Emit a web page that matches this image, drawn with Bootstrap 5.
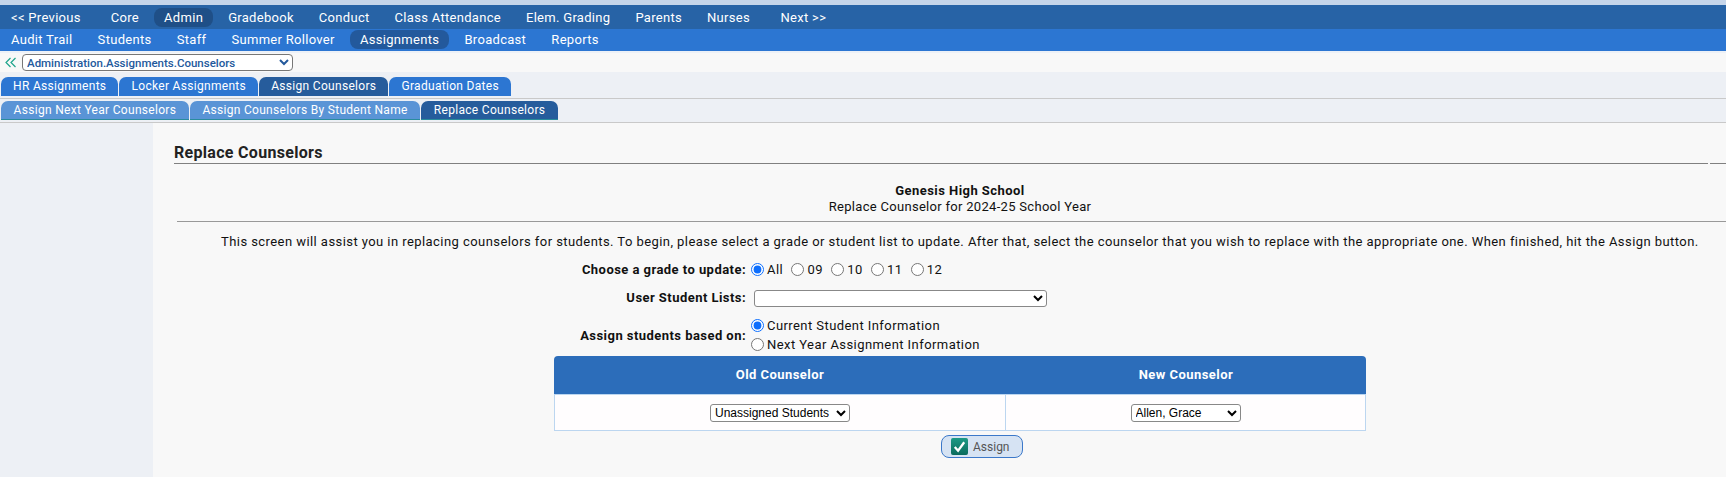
<!DOCTYPE html>
<html lang="en">
<head>
<meta charset="utf-8">
<title>Replace Counselors</title>
<link href="https://cdn.jsdelivr.net/npm/bootstrap@5.3.0/dist/css/bootstrap.min.css" rel="stylesheet">
<style>
html,body{height:100%;}
body{font-family:Roboto,"Liberation Sans",sans-serif;font-size:13px;background:#f8f8f8;color:#111;letter-spacing:.3px;overflow:hidden;}
.top-strip{height:5px;background:#c5d5ea;}
.menu-one{height:24px;background:#2763a6;padding-left:1px;}
.menu-two{height:22px;background:#2c76d2;padding-left:1px;}
.menu-one .nav-link,.menu-two .nav-link{color:#fff;font-size:13px;padding:0 10px;margin:0 5px 0 0;border-radius:8px;height:19px;line-height:19px;}
.menu-two .nav-link{margin-right:5.2px;}
.menu-one .nav-link{margin-top:3px;}
.menu-two .nav-link{margin-top:1px;}
.menu-one .nav-link.active-item{background:#1f4f87;}
.menu-two .nav-link.active-item{background:#23599c;}
.menu-one .nav-link.gap-prev{margin-right:10px;}
.menu-one .nav-link.gap-next{margin-left:5.5px;}
.crumb-row{height:21px;background:#f8f8f8;border-top:2px solid #edf1f7;padding-left:5px;}
.crumb-row svg{display:block;margin-right:5px;}
.crumb-select{width:271px;height:17px;font-family:Roboto,"Liberation Sans",sans-serif;font-size:11.5px;font-weight:500;color:#23599c;border:1px solid #777;border-radius:4px;background:#fff;padding:0;}
.tab-row{height:27px;background:#edf0f5;border-bottom:1px solid #c9c9c9;padding-left:1px;padding-bottom:2px;align-items:flex-end;gap:1px;}
.tab-row.sub-row{height:24px;}
.page-tab{display:block;color:#fff;text-decoration:none;font-size:12px;height:19px;line-height:18px;padding:0 12.1px;border-radius:7px 7px 0 0;background:#2c76d2;}
.sub-row .page-tab{background:#5a94d6;border-bottom:1px solid #2a8c9c;padding:0 12.6px;}
.page-tab.on{background:#265c9c;}
.sub-row .page-tab.on{background:#265c9c;}
.main-area{height:354px;}
.side-col{width:153px;background:#edf0f5;flex:none;}
.body-col{flex:1;min-width:0;background:#f8f8f8;}
.title-row{margin:14px 0 0 21px;gap:2px;}
.title-main{flex:1;border-bottom:1px solid #808080;font-size:16px;font-weight:700;letter-spacing:.3px;color:#222;height:27px;line-height:31px;padding-left:0;}
.title-stub{width:16px;border-bottom:1px solid #808080;height:27px;}
.school-block{margin-top:19px;line-height:16px;text-align:center;padding-left:41px;}
.school-name{font-weight:700;letter-spacing:.45px;}
.rule-line{margin:6px 0 0 24px;border-bottom:1px solid #999;height:0;}
.intro-text{text-align:center;margin:11px 0 0 0;padding-left:68px;padding-right:28px;line-height:18px;white-space:nowrap;letter-spacing:.435px;}
.form-line{align-items:center;}
.form-label-cell{width:598px;text-align:right;font-weight:700;letter-spacing:.45px;padding-right:5px;flex:none;}
.grade-line{margin-top:10px;height:18px;}
.grade-line label{margin-right:8.3px;display:flex;align-items:center;letter-spacing:.43px;}
.grade-line input,.based-line input{width:13px;height:13px;margin:0 3px 2px 0;accent-color:#0d6efd;}
.list-line{margin-top:10px;height:18px;}
.list-select{width:293px;height:17px;margin-left:3px;background:#fff;border:1px solid #888;border-radius:3px;}
.based-line{margin-top:10px;height:37px;}
.based-line label{display:flex;align-items:center;height:19px;letter-spacing:.43px;}
.pick-wrap{width:812px;margin:2px 0 0 401px;}
.pick-table{width:100%;margin:0;table-layout:fixed;border-collapse:separate;border-spacing:0;}
.pick-table th{background:#2c6dba;color:#fff;height:39px;text-align:center;vertical-align:middle;font-size:13px;padding:0;border-bottom:1px solid #bcd6f0;letter-spacing:.45px;}
.pick-table th:first-child{border-top-left-radius:4px;width:452px;}
.pick-table th:last-child{border-top-right-radius:4px;}
.pick-table td{background:#fffdfe;height:36px;text-align:center;vertical-align:middle;padding:0;border-bottom:1px solid #bcd6f0;border-right:1px solid #bcd6f0;}
.pick-table td:first-child{border-left:1px solid #bcd6f0;}
.pick-select{width:140px;height:18px;font-family:"Liberation Sans",Arial,sans-serif;font-size:12px;background:#fff;border:1px solid #888;border-radius:3px;padding:0;color:#000;letter-spacing:0;}
.pick-select.short-pick{width:110px;}
.assign-btn{display:flex;align-items:center;gap:5px;width:82px;height:23px;margin:4px 0 0 387px;background:#d6e3f3;border:1px solid #3b78c9;border-radius:8px;color:#555;font-size:12px;padding:0 0 0 9px;}
.assign-wrap{width:812px;margin-left:401px;}
</style>
</head>
<body>
<div class="top-strip"></div>
<nav class="nav menu-one">
  <a class="nav-link gap-prev" href="#">&lt;&lt; Previous</a>
  <a class="nav-link" href="#">Core</a>
  <a class="nav-link active-item" href="#">Admin</a>
  <a class="nav-link" href="#">Gradebook</a>
  <a class="nav-link" href="#">Conduct</a>
  <a class="nav-link" href="#">Class Attendance</a>
  <a class="nav-link" href="#">Elem. Grading</a>
  <a class="nav-link" href="#">Parents</a>
  <a class="nav-link" href="#">Nurses</a>
  <a class="nav-link gap-next" href="#">Next &gt;&gt;</a>
</nav>
<nav class="nav menu-two">
  <a class="nav-link" href="#">Audit Trail</a>
  <a class="nav-link" href="#">Students</a>
  <a class="nav-link" href="#">Staff</a>
  <a class="nav-link" href="#">Summer Rollover</a>
  <a class="nav-link active-item" href="#">Assignments</a>
  <a class="nav-link" href="#">Broadcast</a>
  <a class="nav-link" href="#">Reports</a>
</nav>
<div class="crumb-row d-flex align-items-center">
  <svg width="12" height="11" viewBox="0 0 12 11" fill="none" stroke="#1fa58c" stroke-width="1.2"><path d="M5.5 1 1 5.5 5.5 10M10.5 1 6 5.5 10.5 10"/></svg>
  <select class="crumb-select"><option>Administration.Assignments.Counselors</option></select>
</div>
<div class="tab-row d-flex">
  <a class="page-tab" href="#">HR Assignments</a>
  <a class="page-tab" href="#">Locker Assignments</a>
  <a class="page-tab on" href="#">Assign Counselors</a>
  <a class="page-tab" href="#">Graduation Dates</a>
</div>
<div class="tab-row sub-row d-flex">
  <a class="page-tab" href="#">Assign Next Year Counselors</a>
  <a class="page-tab" href="#">Assign Counselors By Student Name</a>
  <a class="page-tab on" href="#">Replace Counselors</a>
</div>
<div class="main-area d-flex">
  <div class="side-col"></div>
  <div class="body-col">
    <div class="title-row d-flex">
      <div class="title-main">Replace Counselors</div>
      <div class="title-stub"></div>
    </div>
    <div class="school-block">
      <div class="school-name">Genesis High School</div>
      <div>Replace Counselor for 2024-25 School Year</div>
    </div>
    <div class="rule-line"></div>
    <p class="intro-text">This screen will assist you in replacing counselors for students. To begin, please select a grade or student list to update. After that, select the counselor that you wish to replace with the appropriate one. When finished, hit the Assign button.</p>
    <div class="form-line grade-line d-flex">
      <div class="form-label-cell">Choose a grade to update:</div>
      <label><input type="radio" name="grade" checked>All</label>
      <label><input type="radio" name="grade">09</label>
      <label><input type="radio" name="grade">10</label>
      <label><input type="radio" name="grade">11</label>
      <label><input type="radio" name="grade">12</label>
    </div>
    <div class="form-line list-line d-flex">
      <div class="form-label-cell">User Student Lists:</div>
      <select class="list-select"><option></option></select>
    </div>
    <div class="form-line based-line d-flex">
      <div class="form-label-cell">Assign students based on:</div>
      <div>
        <label><input type="radio" name="based" checked>Current Student Information</label>
        <label><input type="radio" name="based">Next Year Assignment Information</label>
      </div>
    </div>
    <div class="pick-wrap">
      <table class="pick-table">
        <thead><tr><th>Old Counselor</th><th>New Counselor</th></tr></thead>
        <tbody><tr>
          <td><select class="pick-select"><option>Unassigned Students</option></select></td>
          <td><select class="pick-select short-pick"><option>Allen, Grace</option></select></td>
        </tr></tbody>
      </table>
    </div>
    <div class="assign-wrap">
      <button type="button" class="assign-btn">
        <svg width="17" height="17" viewBox="0 0 18 18"><defs><linearGradient id="chk" x1="0" y1="0" x2="0" y2="1"><stop offset="0" stop-color="#1c9a86"/><stop offset="1" stop-color="#0b6b5c"/></linearGradient></defs><rect width="18" height="18" rx="2" fill="url(#chk)"/><path d="M4 9.5 7.5 13.5 14 4.5" fill="none" stroke="#fff" stroke-width="2.4"/></svg>
        Assign
      </button>
    </div>
  </div>
</div>
<script src="https://cdn.jsdelivr.net/npm/bootstrap@5.3.0/dist/js/bootstrap.bundle.min.js"></script>
</body>
</html>
